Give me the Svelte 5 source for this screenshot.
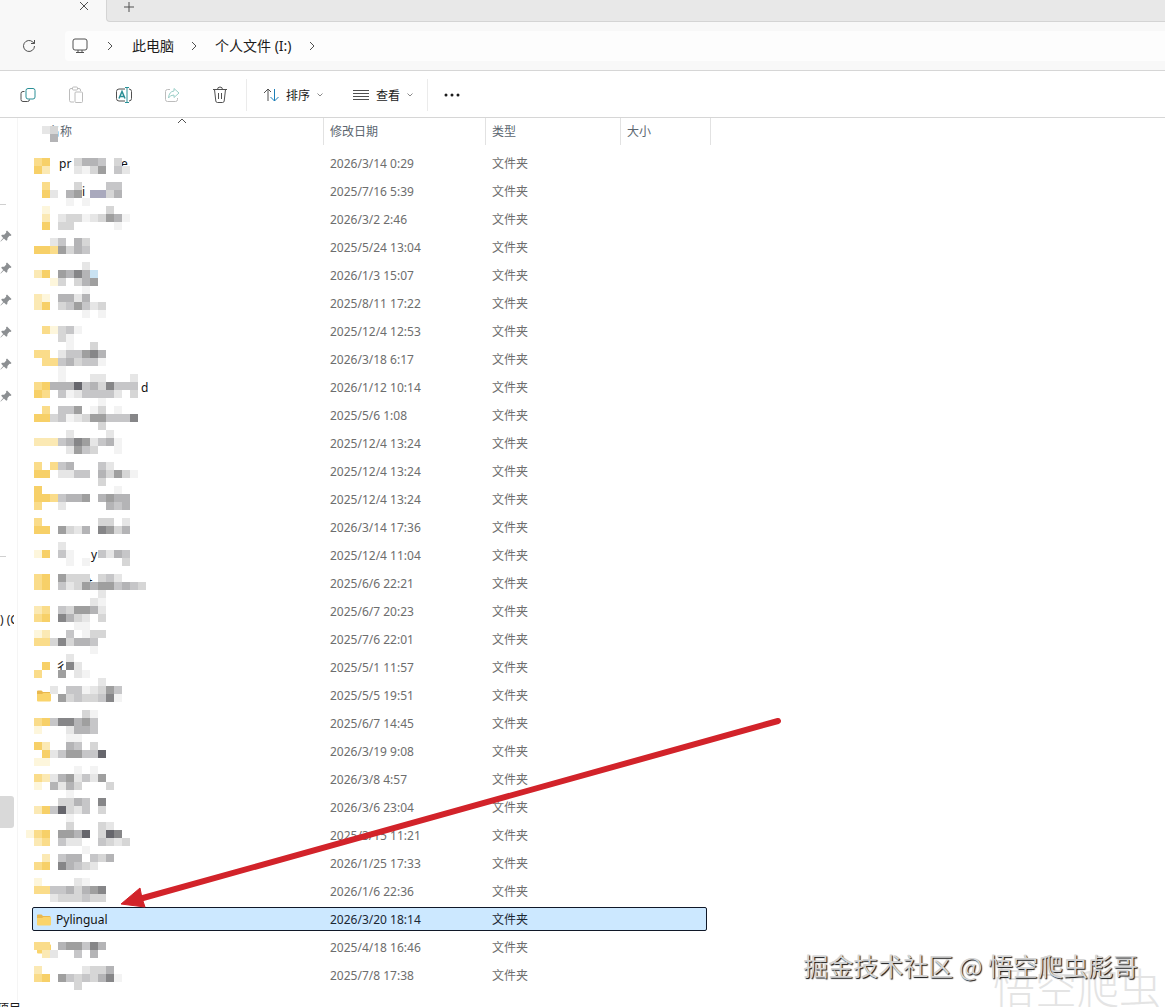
<script lang="ts">
	type Row = {
		date: string;
		name?: string;
		folder?: boolean;
	};

	const rows: Row[] = [
		{ date: '2026/3/14 0:29' },
		{ date: '2025/7/16 5:39' },
		{ date: '2026/3/2 2:46' },
		{ date: '2025/5/24 13:04' },
		{ date: '2026/1/3 15:07' },
		{ date: '2025/8/11 17:22' },
		{ date: '2025/12/4 12:53' },
		{ date: '2026/3/18 6:17' },
		{ date: '2026/1/12 10:14' },
		{ date: '2025/5/6 1:08' },
		{ date: '2025/12/4 13:24' },
		{ date: '2025/12/4 13:24' },
		{ date: '2025/12/4 13:24' },
		{ date: '2026/3/14 17:36' },
		{ date: '2025/12/4 11:04' },
		{ date: '2025/6/6 22:21' },
		{ date: '2025/6/7 20:23' },
		{ date: '2025/7/6 22:01' },
		{ date: '2025/5/1 11:57' },
		{ date: '2025/5/5 19:51', folder: true },
		{ date: '2025/6/7 14:45' },
		{ date: '2026/3/19 9:08' },
		{ date: '2026/3/8 4:57' },
		{ date: '2026/3/6 23:04' },
		{ date: '2025/3/15 11:21' },
		{ date: '2026/1/25 17:33' },
		{ date: '2026/1/6 22:36' },
		{ date: '2026/3/20 18:14', name: 'Pylingual', folder: true },
		{ date: '2025/4/18 16:46', folder: true },
		{ date: '2025/7/8 17:38' }
	];

	let selected = $state(27);

	// redacted names: one letter per 8px cell, keyed by cell row
	const mosaic: Record<number, string> = {
		0: '..bc',
		1: '...e',
		4: '.yz...ceed.c',
		5: '.zx...bacf.db',
		7: '..y...c...dd',
		8: '..zb.ef.ppce',
		9: '.....a.a',
		10: '..w.......c',
		11: '..x.bccabcfea',
		12: '..z.cc.....a',
		14: '...bd.ec',
		15: '.zzyfced',
		17: '.......b',
		18: '.xz.feges',
		19: '...wc.cef',
		20: '.......a',
		21: '.xw.eebe',
		22: '.xz.cdfdbc',
		23: '.......a.a',
		25: '..ywcda',
		26: '....ca',
		27: '.....a..c',
		28: '.yy.bddfge',
		29: '..yydecdda',
		30: '....a',
		31: '....a...bb...b',
		32: '.yzeeehdecgddd',
		33: '.zy.dabddddb.c',
		34: '.........a',
		35: '..y.ddf.ac.a',
		36: '.zzcdabcffdddg',
		37: '.........c',
		38: '.....b....b',
		39: '.xxxdegfbdea',
		40: '.....bfdc..a',
		42: '.y.yde...db',
		43: '.zz.bbdd.ecfca',
		44: '.........c',
		45: '.z.........a',
		46: '.zzydeef.efee',
		47: '.y..b.....ede',
		49: '.y.......cc.b',
		50: '.zz.fcbe.gfce',
		52: '....b',
		53: '.wz.da...dbed',
		54: '.....a.a....c',
		56: '.yz.fccc.cdb',
		57: '.yz.dbcfeffdedc',
		58: '.........b',
		59: '........ba',
		60: '.xy.dcffeb',
		61: '.yz.gecb.c',
		62: '......aa',
		63: '.wx..d.acc',
		64: '.yycgceed',
		65: '........a',
		66: '.....b',
		67: '..z..gb',
		68: '.y..f.ba',
		69: '.........b',
		70: '...b.ddabcfd',
		71: '....fcdccdga',
		73: '.......ca',
		74: '.yzdggefd',
		75: '.w...beed',
		76: '.....aa',
		77: '.zx..ed.c',
		78: '..zbdffddh',
		79: '.ww',
		80: '......a.a',
		81: '.yxbefbdbf',
		82: '.w.ebec...c',
		83: '.....a',
		84: '....cced.g',
		85: '.xzdhcbd.c',
		86: '.....a',
		87: '.....c...cb',
		88: 'wyz.ffeh.chg',
		89: '.xy.dbb..dcbc',
		90: '.......a',
		91: '..x.dee.dce',
		92: '.yz.gedcb',
		94: '.w....ba',
		95: '.yyddecefg',
		96: '...bcccdcc',
		102: '.yy.effdge',
		103: '..xb..d.e',
		105: '.x.....bcce',
		106: '.yz.fdcdcega',
		107: '......c'
	};

	const shades: Record<string, string> = {
		a: '#f3f3f3',
		b: '#e6e6e6',
		c: '#d6d6d6',
		d: '#c6c6c8',
		e: '#b4b4b6',
		f: '#9f9f9f',
		g: '#868688',
		h: '#66666c',
		w: '#fdf6dc',
		x: '#fbe9b4',
		y: '#fadc8a',
		z: '#f7d068',
		p: '#a9a9bd',
		s: '#c9e2f2'
	};

	const cells = Object.entries(mosaic).flatMap(([row, line]) =>
		[...line]
			.map((shade, col) => ({ x: col * 8, y: Number(row) * 8, shade }))
			.filter((c) => c.shade !== '.')
	);

	// letters that stick out from under the mosaic
	const scraps = [
		{ x: 33, y: 42, text: 'pr' },
		{ x: 95, y: 42, text: 'e' },
		{ x: 56, y: 70, text: 'i' },
		{ x: 115, y: 266, text: 'd' },
		{ x: 65, y: 433, text: 'y' },
		{ x: 62, y: 461, text: 't' },
		{ x: 29, y: 545, text: '彳' }
	];
</script>

{#snippet chevron(cls: string)}
	<svg class={cls} width="8" height="10" viewBox="0 0 8 10"><path d="M2 1l4 4-4 4" /></svg>
{/snippet}

{#snippet folderIcon()}
	<svg class="folder" width="16" height="14" viewBox="0 0 16 14">
		<path d="M1 2.500Q1 1.500 2 1.500H5.500L7 3H13.500Q14.500 3 14.500 4V6H1z" fill="#e9b84e" />
		<path d="M1 5H6L7.500 4H15V11.500Q15 12.500 14 12.500H2Q1 12.500 1 11.500z" fill="#fad46b" />
	</svg>
{/snippet}

{#snippet pin()}
	<svg width="12" height="12" viewBox="0 0 12 12">
		<path d="M7 0.500L11.500 5L10.500 6L9.500 5.800L7.500 8L7.300 10L6.300 10.800L3.900 8.500L0.800 11.500L0.400 11.200L3.200 7.900L1.200 5.800L2 4.800L4.200 4.700L6.300 2.500L6 1.500z" />
	</svg>
{/snippet}

<div class="window">
	<div class="tabs">
		<div class="tab">
			<button aria-label="关闭">
				<svg width="10" height="10" viewBox="0 0 10 10"><path d="M1 1l8 8M9 1l-8 8" /></svg>
			</button>
		</div>
		<div class="strip">
			<button aria-label="新建标签页">
				<svg width="12" height="12" viewBox="0 0 12 12"><path d="M6 1v10M1 6h10" /></svg>
			</button>
		</div>
	</div>

	<nav>
		<button class="reload" aria-label="刷新">
			<svg width="14" height="14" viewBox="0 0 14 14">
				<path d="M12.500 7A5.500 5.500 0 1 1 10.900 3.100L12.500 4.500M12.500 1v3.500H9" />
			</svg>
		</button>
		<div class="address">
			<svg width="16" height="16" viewBox="0 0 16 16">
				<rect x="1" y="1" width="14" height="11" rx="2" />
				<path d="M6 12v2.500M10 12v2.500M4 14.500h8" />
			</svg>
			{@render chevron('sep')}
			<a href="#pc">此电脑</a>
			{@render chevron('sep')}
			<a href="#drive">个人文件 (I:)</a>
			{@render chevron('sep')}
		</div>
	</nav>

	<div class="toolbar">
		<button class="tool" aria-label="复制">
			<svg width="16" height="16" viewBox="0 0 16 16">
				<path d="M4.500 4.500H3Q1 4.500 1 6.500V12.500Q1 14.500 3 14.500H7.500Q9.500 14.500 9.500 12.500" />
				<rect class="teal" x="6" y="1.500" width="9" height="10.500" rx="2" />
			</svg>
		</button>
		<button class="tool faded" aria-label="粘贴">
			<svg width="16" height="18" viewBox="0 0 16 18">
				<path d="M6 16H3Q1.500 16 1.500 14.500V4Q1.500 2.500 3 2.500H4.500M9.500 2.500H11Q12.500 2.500 12.500 4V5" />
				<rect x="4.500" y="1" width="5" height="3" rx="1" />
				<rect x="7" y="6" width="7.500" height="10.500" rx="1" />
			</svg>
		</button>
		<button class="tool" aria-label="重命名">
			<svg width="18" height="18" viewBox="0 0 18 18">
				<path d="M10 3H4Q1.500 3 1.500 5.500V12.500Q1.500 15 4 15H10M14 3Q16.500 3 16.500 5.500V12.500Q16.500 15 14 15" />
				<path class="teal bold" d="M4 12.500L7 5.500L10 12.500M5 10.500H9" />
				<path class="teal" d="M10 1.500H14M10 16.500H14M12 1.500V16.500" />
			</svg>
		</button>
		<button class="tool faded" aria-label="共享">
			<svg width="16" height="16" viewBox="0 0 16 16">
				<path d="M6 2.500H3.500Q1.500 2.500 1.500 4.500V12.500Q1.500 14.500 3.500 14.500H11.500Q13.500 14.500 13.500 12.500V11" />
				<path class="teal" d="M10 1.500L15 6L10 10.500V8Q6 8 4.500 11Q5 4.500 10 4z" />
			</svg>
		</button>
		<button class="tool" aria-label="删除">
			<svg width="16" height="18" viewBox="0 0 16 18">
				<path d="M1 3.500H15M5.500 3.500Q5.500 1 8 1T10.500 3.500M2.500 3.500L3.800 15Q4 16.500 5.500 16.500H10.500Q12 16.500 12.200 15L13.500 3.500M6.500 7V13M9.500 7V13" />
			</svg>
		</button>
		<button class="menu">
			<svg width="16" height="16" viewBox="0 0 16 16">
				<path d="M5 14V2M1 6L5 2L8 5" />
				<path class="blue" d="M11.500 2V14M7.500 10L11.500 14L15.500 10" />
			</svg>
			<span>排序</span>
			<svg class="down" width="6" height="6" viewBox="0 0 6 6"><path d="M0.500 1.500L3 4L5.500 1.500" /></svg>
		</button>
		<button class="menu view">
			<svg width="16" height="16" viewBox="0 0 16 16">
				<path d="M0 3.500H16M0 6.500H16M0 9.500H16M0 12.500H16" />
			</svg>
			<span>查看</span>
			<svg class="down" width="6" height="6" viewBox="0 0 6 6"><path d="M0.500 1.500L3 4L5.500 1.500" /></svg>
		</button>
		<button class="tool more" aria-label="更多">
			<svg width="16" height="4" viewBox="0 0 16 4">
				<circle cx="2" cy="2" r="1.500" /><circle cx="8" cy="2" r="1.500" /><circle cx="14" cy="2" r="1.500" />
			</svg>
		</button>
	</div>

	<div class="content">
		<aside>
			<hr />
			<div class="pins">
				{#each { length: 6 } as _}
					{@render pin()}
				{/each}
			</div>
			<hr />
			<div class="drive">) (C:)</div>
			<div class="current"></div>
		</aside>

		<main>
			<table>
				<thead>
					<tr>
						<th>
							名称
							<svg class="caret" width="10" height="6" viewBox="0 0 10 6"><path d="M1 5l4-4 4 4" /></svg>
						</th>
						<th>修改日期</th>
						<th>类型</th>
						<th>大小</th>
					</tr>
				</thead>
				<tbody>
					{#each rows as row, i}
						<tr class:selected={selected === i} onclick={() => (selected = i)}>
							<td>
								{#if row.folder}{@render folderIcon()}{/if}
								{row.name ?? ''}
							</td>
							<td>{row.date}</td>
							<td>文件夹</td>
							<td></td>
						</tr>
					{/each}
				</tbody>
			</table>

			<svg class="mosaic" width="130" height="870" viewBox="0 0 130 870">
				{#each scraps as s}
					<text x={s.x} y={s.y}>{s.text}</text>
				{/each}
				{#each cells as c}
					<rect x={c.x} y={c.y} width="8" height="8" fill={shades[c.shade]} />
				{/each}
			</svg>

			<svg class="arrow" width="670" height="200" viewBox="0 0 670 200">
				<path d="M659 10L24 187" />
				<polygon points="2,193 21,177 23,187 26,196" />
			</svg>
		</main>
	</div>

	<footer>个项目</footer>

	<div class="ghost">悟空爬虫</div>
	<div class="watermark">掘金技术社区 @ 悟空爬虫彪哥</div>
</div>

<style>
	:global(body) {
		background: #fff;
		overflow: hidden;
	}

	.window {
		position: relative;
		display: flex;
		flex-direction: column;
		height: 100vh;
		overflow: hidden;
		font-family: 'Noto Sans', 'Noto Sans CJK SC', sans-serif;
		font-size: 12px;
		line-height: 16px;
		color: #1b1b1b;
	}

	button {
		display: flex;
		align-items: center;
		justify-content: center;
		padding: 0;
		border: none;
		background: none;
		font: inherit;
		color: inherit;
	}

	svg {
		flex: none;
		fill: none;
		stroke: #505050;
	}

	.tabs {
		display: flex;
		height: 22px;
		background: #f8f8f8;
	}

	.tab {
		display: flex;
		justify-content: flex-end;
		align-items: flex-start;
		box-sizing: border-box;
		width: 106px;
		padding: 1px 17px 0 0;
	}

	.strip {
		flex: 1;
		display: flex;
		align-items: flex-start;
		box-sizing: border-box;
		padding: 1px 0 0 16px;
		background: #e8e8e8;
		border-left: 1px solid #d4d4d4;
		border-bottom: 1px solid #d4d4d4;
		border-bottom-left-radius: 4px;
	}

	nav {
		display: flex;
		align-items: center;
		height: 48px;
		background: #f8f8f8;
		border-bottom: 1px solid #d6d6d6;
	}

	.reload {
		width: 58px;
	}

	.address {
		flex: 1;
		display: flex;
		align-items: center;
		height: 30px;
		margin-left: 7px;
		padding-left: 7px;
		border-radius: 4px 0 0 4px;
		background: #fdfdfd;
		font-size: 14px;
		line-height: 20px;
	}

	.address a {
		color: #1b1b1b;
		text-decoration: none;
	}

	.sep {
		margin: 0 18px;
	}

	a + .sep {
		margin: 0 17px 0 16px;
	}

	.toolbar {
		display: flex;
		align-items: center;
		box-sizing: border-box;
		height: 47px;
		padding: 2px 0 0 4px;
		border-bottom: 1px solid #d6d6d6;
	}

	.tool {
		width: 48px;
		height: 32px;
	}

	.teal {
		stroke: #2a8f96;
	}

	.bold {
		stroke-width: 1.5;
	}

	.blue {
		stroke: #1c7fb8;
	}

	.faded svg {
		stroke: #bcbcbc;
	}

	.faded .teal {
		stroke: #9bcfc8;
	}

	.menu {
		gap: 7px;
		height: 32px;
		margin-left: 2px;
		padding: 0 14px 0 16px;
		border-left: 1px solid #ebebeb;
	}

	.menu span {
		padding-top: 2px;
	}

	.menu.view {
		margin-left: 0;
		border-left: none;
		border-right: 1px solid #ebebeb;
	}

	.down {
		stroke: #8a8a8a;
	}

	.more svg {
		fill: #1b1b1b;
		stroke: none;
	}

	.content {
		display: flex;
		flex: 1;
		min-height: 0;
	}

	aside {
		display: flex;
		flex-direction: column;
		box-sizing: border-box;
		width: 18px;
		padding-top: 86px;
		border-right: 1px solid #f5f5f5;
		overflow: hidden;
	}

	hr {
		width: 6px;
		margin: 0;
		border: none;
		border-top: 1px solid #d0d0d0;
	}

	.pins {
		display: flex;
		flex-direction: column;
		gap: 20px;
		padding: 25px 0 154px;
	}

	.pins svg {
		fill: #8c8f92;
		stroke: none;
	}

	.drive {
		width: 14px;
		margin: 55px 0 168px;
		overflow: hidden;
		white-space: nowrap;
	}

	.current {
		width: 14px;
		height: 32px;
		border-radius: 0 3px 3px 0;
		background: #d9d9d9;
	}

	main {
		position: relative;
		flex: 1;
		padding-left: 14px;
	}

	table,
	thead,
	tbody {
		display: block;
	}

	tr {
		display: grid;
		grid-template-columns: 292px 162px 135px 90px;
	}

	th {
		position: relative;
		padding: 6px 0 5px 6px;
		border-right: 1px solid #e2e2e2;
		font-weight: normal;
		text-align: left;
		color: #5c6670;
	}

	th:first-child {
		padding-left: 16px;
	}

	.caret {
		position: absolute;
		top: 0;
		left: 145px;
	}

	tbody {
		padding-top: 6px;
		color: #6d6d6d;
	}

	tbody tr {
		grid-template-columns: 291px 162px 135px 85px;
		box-sizing: border-box;
		width: 675px;
		height: 24px;
		margin-bottom: 4px;
		border: 1px solid transparent;
		border-radius: 2px;
	}

	tbody tr.selected {
		border-color: #101828;
		background: #cce8ff;
		color: #1b2733;
	}

	td {
		display: flex;
		align-items: center;
		padding: 2px 0 0 6px;
	}

	td:first-child {
		gap: 4px;
		padding-left: 3px;
		color: #111;
	}

	.folder {
		stroke: none;
	}

	.mosaic {
		position: absolute;
		top: 8px;
		left: 8px;
		pointer-events: none;
	}

	.mosaic rect {
		stroke: none;
	}

	.mosaic text {
		fill: #111;
		stroke: none;
	}

	.arrow {
		position: absolute;
		top: 593px;
		left: 101px;
		pointer-events: none;
	}

	.arrow path {
		stroke: #d2232a;
		stroke-width: 6;
		stroke-linecap: round;
	}

	.arrow polygon {
		fill: #d2232a;
		stroke: #d2232a;
	}

	footer {
		height: 6px;
		margin-left: -15px;
		overflow: hidden;
	}

	.watermark,
	.ghost {
		position: absolute;
		white-space: nowrap;
		font-family: 'Noto Sans CJK SC', sans-serif;
		pointer-events: none;
	}

	.watermark {
		right: 27px;
		bottom: 24px;
		font-size: 25px;
		line-height: 36px;
		color: #d4d4d4;
		text-shadow: 1px 1px 1px #111;
	}

	.ghost {
		right: 4px;
		bottom: -9px;
		font-size: 42px;
		font-weight: 300;
		line-height: 60px;
		color: #e4e4e4;
	}
</style>
